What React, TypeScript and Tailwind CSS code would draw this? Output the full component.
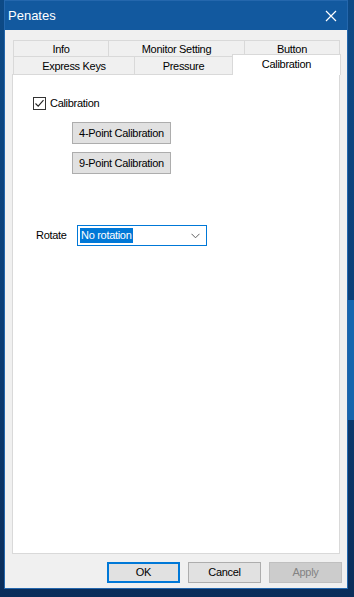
import React from "react";

const font = { fontFamily: '"Liberation Sans", Arial, sans-serif' };
const txt = "text-[11px] tracking-[-0.3px] whitespace-nowrap";

function Tab({ w, label, h = "h-[17px]", selected = false }: { w: string; label: string; h?: string; selected?: boolean }) {
  return (
    <div
      className={`${w} ${h} flex justify-center border-t border-l border-r leading-none ${txt} ${
        selected ? "bg-white border-[#d9d9d9] relative z-10 -mb-px h-[21px] items-start pt-[4px]" : "bg-[#f0f0f0] border-[#d9d9d9] items-center pt-[1px]"
      } -mr-px text-black`}
    >
      {label}
    </div>
  );
}

export default function App() {
  return (
    <div className="w-[354px] h-[597px] overflow-hidden bg-gradient-to-b from-[#0d4a86] via-[#0b3f78] to-[#0a2d5a] relative" style={font}>
      <div className="absolute right-0 top-[300px] w-[6px] h-[120px] bg-[#1b78c8] opacity-70" />
      <div className="ml-[4px] w-[344px] h-[589px] border border-[#2467ad] flex flex-col relative">
        {/* Title bar */}
        <div className="h-[29px] bg-[#12599f] flex items-center justify-between pl-[3px] pr-[9px]">
          <span className="text-white text-[13px]">Penates</span>
          <svg width="12" height="12" viewBox="0 0 12 12" className="mr-[1px]">
            <path d="M1 1 L11 11 M11 1 L1 11" stroke="white" strokeWidth="1.2" />
          </svg>
        </div>
        {/* Body */}
        <div className="flex-1 bg-[#f0f0f0] flex flex-col pl-[7px] pr-[5px] pt-[10px]">
          {/* Tabs */}
          <div className="w-[328px] flex flex-col">
            <div className="flex pl-[1px]">
              <Tab w="w-[96px]" label="Info" />
              <Tab w="w-[137px]" label="Monitor Setting" />
              <Tab w="w-[96px]" label="Button" />
            </div>
            <div className="flex items-end pl-[1px] -mt-[2px] h-[19px]">
              <Tab w="w-[122px]" label="Express Keys" h="h-[18px]" />
              <Tab w="w-[99px]" label="Pressure" h="h-[18px]" />
              <Tab w="w-[109px]" label="Calibration" selected />
            </div>
            {/* Panel */}
            <div className="h-[480px] bg-white border border-[#d9d9d9] relative">
              <div className={`ml-[20px] mt-[22px] h-[13px] flex items-center gap-[3px] text-black ${txt}`}>
                <div className="w-[13px] h-[13px] border border-[#333333] bg-white flex items-center justify-center shrink-0">
                  <svg width="11" height="11" viewBox="0 0 11 11">
                    <path d="M1.5 5.5 L4.2 8.2 L9.5 2.2" stroke="#222" strokeWidth="1.1" fill="none" />
                  </svg>
                </div>
                <span className="ml-[1px] leading-none">Calibration</span>
              </div>
              <div className="ml-[59px] mt-[12px] flex flex-col gap-[8px]">
                <button className={`w-[99px] h-[22px] bg-[#e1e1e1] border border-[#adadad] text-black flex items-center justify-center ${txt}`}>
                  4-Point Calibration
                </button>
                <button className={`w-[99px] h-[22px] bg-[#e1e1e1] border border-[#adadad] text-black flex items-center justify-center ${txt}`}>
                  9-Point Calibration
                </button>
              </div>
              <div className={`ml-[23px] mt-[51px] flex items-center text-black ${txt}`}>
                <span className="w-[41px]">Rotate</span>
                <div className="w-[130px] h-[21px] border border-[#0078d7] bg-white flex items-center justify-between pl-[2px] pr-[6px]">
                  <span className="bg-[#0078d7] text-white h-[15px] flex items-center px-[1px]">No rotation</span>
                  <svg width="9" height="6" viewBox="0 0 9 6">
                    <path d="M0.5 0.8 L4.5 4.8 L8.5 0.8" stroke="#606060" strokeWidth="1" fill="none" />
                  </svg>
                </div>
              </div>
            </div>
          </div>
          {/* Footer buttons */}
          <div className="flex justify-end gap-[8px] pt-[8px]">
            <button className={`w-[73px] h-[21px] bg-[#e1e1e1] border-2 border-[#0078d7] text-black flex items-center justify-center ${txt}`}>
              OK
            </button>
            <button className={`w-[73px] h-[21px] bg-[#e1e1e1] border border-[#adadad] text-black flex items-center justify-center ${txt}`}>
              Cancel
            </button>
            <button className={`w-[73px] h-[21px] bg-[#cccccc] border border-[#bfbfbf] text-[#838383] flex items-center justify-center ${txt}`}>
              Apply
            </button>
          </div>
        </div>
      </div>
    </div>
  );
}
